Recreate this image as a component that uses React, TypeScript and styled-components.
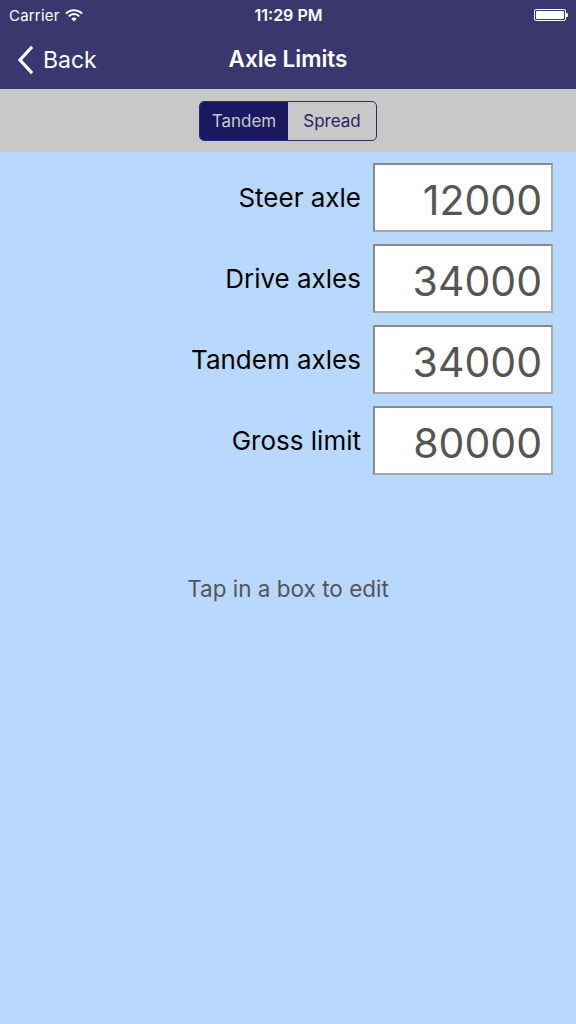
import React from "react";
import styled, { createGlobalStyle } from "styled-components";

const Global = createGlobalStyle`
  html, body { margin: 0; padding: 0; background: #b8d8fe; }
  body { font-family: Inter, "Noto Sans", "Liberation Sans", sans-serif; -webkit-font-smoothing: antialiased; }
  * { box-sizing: border-box; }
`;

const Screen = styled.div`
  width: 576px;
  min-height: 1024px;
  display: flex;
  flex-direction: column;
  background: #b8d8fe;
`;

const Header = styled.div`
  background: #3a376f;
  color: #fff;
  height: 89px;
  display: flex;
  flex-direction: column;
`;

const StatusBar = styled.div`
  height: 30px;
  display: grid;
  grid-template-columns: 1fr auto 1fr;
  align-items: center;
  padding: 0 8px 0 9px;
  font-size: 15px;
`;

const Carrier = styled.div`
  display: flex;
  align-items: center;
  gap: 5px;
  letter-spacing: 0.2px;
`;

const Time = styled.div`
  font-weight: 600;
  font-size: 16px;
`;

const Battery = styled.div`
  justify-self: end;
  display: flex;
  align-items: center;
`;

const BatteryBody = styled.div`
  width: 32px;
  height: 12px;
  border: 1px solid #fff;
  border-radius: 2px;
  padding: 1px;
  display: flex;
  & > div { flex: 1; background: #fff; border-radius: 1px; }
`;

const BatteryNub = styled.div`
  width: 2px;
  height: 4px;
  background: #fff;
  border-radius: 0 1px 1px 0;
`;

const NavBar = styled.div`
  flex: 1;
  display: grid;
  grid-template-columns: 1fr auto 1fr;
  align-items: center;
  padding: 0 17px;
`;

const BackButton = styled.div`
  display: flex;
  align-items: center;
  gap: 10px;
  font-size: 23px;
`;

const Title = styled.div`
  font-size: 22.5px;
  font-weight: 600;
  margin-top: -2px;
`;

const SegmentBand = styled.div`
  background: #c8c8c8;
  height: 63px;
  display: flex;
  align-items: center;
  justify-content: center;
`;

const Segmented = styled.div`
  display: flex;
  width: 178px;
  height: 40px;
  border: 1.5px solid #2e2c6c;
  border-radius: 5px;
  overflow: hidden;
`;

const Segment = styled.div<{ $active?: boolean }>`
  flex: ${(p) => (p.$active ? "0 0 88px" : "1")};
  display: flex;
  align-items: center;
  justify-content: center;
  font-size: 17px;
  background: ${(p) => (p.$active ? "#1a1960" : "transparent")};
  color: ${(p) => (p.$active ? "#c8c8cc" : "#262463")};
`;

const Form = styled.div`
  display: flex;
  flex-direction: column;
  gap: 12px;
  padding: 11px 23px 0 0;
`;

const Row = styled.div`
  display: flex;
  align-items: center;
  justify-content: flex-end;
  gap: 12px;
`;

const Label = styled.div`
  font-size: 26px;
  color: #000;
`;

const ValueBox = styled.div`
  width: 180px;
  height: 69px;
  background: #fff;
  border: 2px solid #8a8a8a;
  border-right-color: #a8a8a8;
  border-bottom-color: #a8a8a8;
  display: flex;
  align-items: center;
  justify-content: flex-end;
  padding: 4px 9px 0 0;
  font-size: 41px;
  color: #555;
`;

const Hint = styled.div`
  margin-top: 100px;
  text-align: center;
  font-size: 22.5px;
  color: #555;
`;

const rows = [
  ["Steer axle", "12000"],
  ["Drive axles", "34000"],
  ["Tandem axles", "34000"],
  ["Gross limit", "80000"],
];

export default function App() {
  return (
    <>
      <Global />
      <Screen>
        <Header>
          <StatusBar>
            <Carrier>
              Carrier
              <svg width="18" height="13" viewBox="0 0 18 13">
                <path d="M1 4.6 A11 11 0 0 1 17 4.6" stroke="#fff" strokeWidth="2" fill="none" />
                <path d="M3.8 7.4 A7 7 0 0 1 14.2 7.4" stroke="#fff" strokeWidth="2" fill="none" />
                <path d="M9 12.5 L6.3 9.8 A3.8 3.8 0 0 1 11.7 9.8 Z" fill="#fff" />
              </svg>
            </Carrier>
            <Time>11:29 PM</Time>
            <Battery>
              <BatteryBody><div /></BatteryBody>
              <BatteryNub />
            </Battery>
          </StatusBar>
          <NavBar>
            <BackButton>
              <svg width="16" height="28" viewBox="0 0 16 28">
                <path d="M14 2 L3 14 L14 26" stroke="#fff" strokeWidth="3.2" fill="none" strokeLinecap="square" />
              </svg>
              Back
            </BackButton>
            <Title>Axle Limits</Title>
            <div />
          </NavBar>
        </Header>
        <SegmentBand>
          <Segmented>
            <Segment $active>Tandem</Segment>
            <Segment>Spread</Segment>
          </Segmented>
        </SegmentBand>
        <Form>
          {rows.map(([l, v]) => (
            <Row key={l}>
              <Label>{l}</Label>
              <ValueBox>{v}</ValueBox>
            </Row>
          ))}
        </Form>
        <Hint>Tap in a box to edit</Hint>
      </Screen>
    </>
  );
}
